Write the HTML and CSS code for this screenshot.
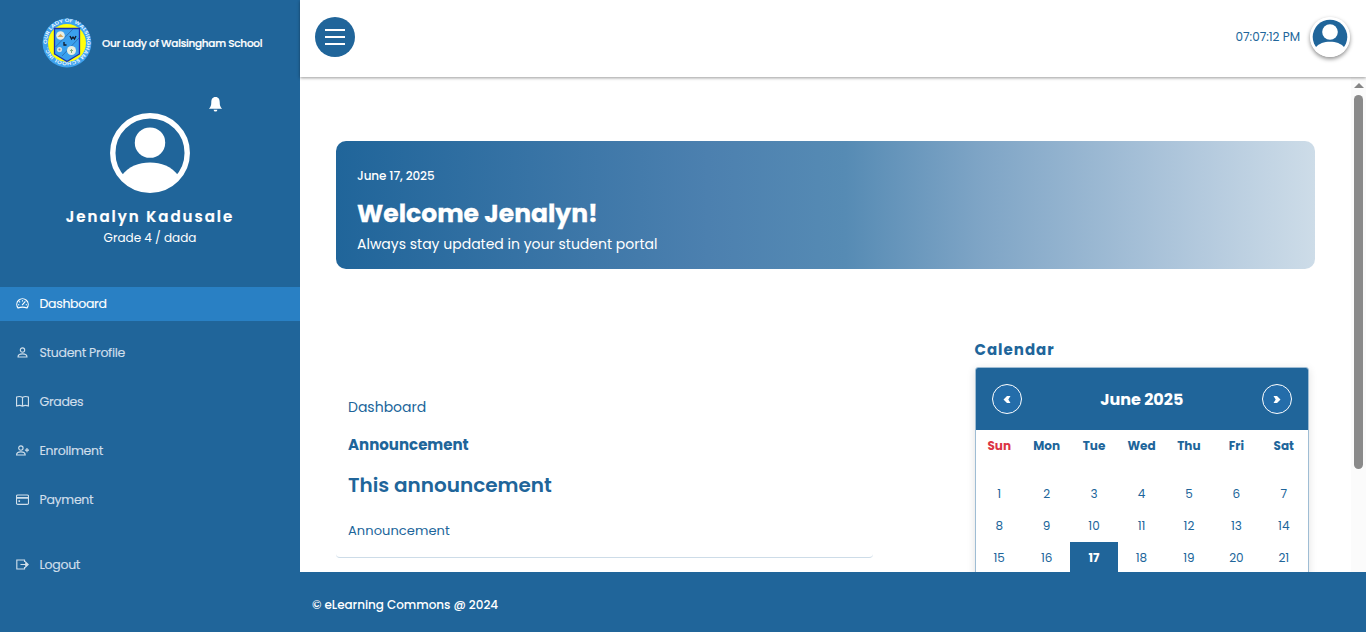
FILE: index.html
```html
<!DOCTYPE html>
<html lang="en">
<head>
<meta charset="utf-8">
<title>Student Portal</title>
<link rel="stylesheet" href="styles.css">
</head>
<body>
<div class="app">
  <aside class="sidebar">
    <div class="brand">
      <svg class="brand-logo" viewBox="0 0 50 50">
        <defs><path id="ring" d="M5.200 26A19.900 19.900 0 1 1 44.800 26A19.900 19.900 0 0 1 5.200 26"/></defs>
        <circle cx="25" cy="25" r="24.400" fill="#3ea2ee"/>
        <circle cx="25" cy="25" r="19" fill="#ffff0a"/>
        <path d="M12.500 10.500H37.500V36L25 43.500 12.500 36Z" fill="#3aa0ee" stroke="#1c2fae" stroke-width="1.300"/>
        <path d="M13.500 29 31 11M20 38 37 20" stroke="#285f9d" stroke-width=".7"/>
        <circle cx="18.500" cy="17.500" r="4.300" fill="#e8efe2"/><path d="M15.500 19h6l-3-3z" fill="#d5a75c"/>
        <circle cx="29.500" cy="32.500" r="4.500" fill="#e8efe2"/><path d="M28 32.500h3M29.500 31v4" stroke="#7bab84"/>
        <circle cx="17.500" cy="31.500" r="2.600" fill="#d2e0e5"/><circle cx="17.500" cy="31.500" r="1" fill="#888"/>
        <path d="M28 18l1.500 3 1.500-2 1.500 2 1.500-3M22 24v3h2.500" fill="none" stroke="#111b2a" stroke-width="1.300"/>
        <text class="ring-text"><textPath href="#ring" textLength="121" lengthAdjust="spacingAndGlyphs">OUR LADY OF WALSINGHAM SCHOOL INC.</textPath></text>
      </svg>
      <span class="brand-name">Our Lady of Walsingham School</span>
    </div>
    <div class="profile">
      <svg class="bell" viewBox="0 0 16 16"><path d="M8 16a2 2 0 0 0 2-2H6a2 2 0 0 0 2 2M8 .5C4.700.5 3.500 3 3.500 6 3.500 9.500 2.800 11 1 13h14c-1.800-2-2.500-3.500-2.500-7C12.500 3 11.300.5 8 .5"/></svg>
      <svg class="avatar" viewBox="0 0 81 81"><circle cx="40.500" cy="40.500" r="37.700" fill="none" stroke="#fff" stroke-width="5.500"/><circle cx="40.500" cy="30" r="15.400" fill="#fff"/><path d="M12 63C19 54 29 50 40.500 50S62 54 69 63L61 74Q40.500 84 20 74Z" fill="#fff"/></svg>
      <div class="profile-name">Jenalyn Kadusale</div>
      <div class="profile-grade">Grade 4 / dada</div>
    </div>
    <nav class="menu">
      <a class="item active"><svg viewBox="0 0 16 16"><path d="M2.500 13.500A7 7 0 1 1 13.500 13.500C10 12.100 6 12.100 2.500 13.500ZM8 4v1.500M2.500 9.500H4M12 9.500h1.500M4 5.500l1 1M7.500 10l4-4.500"/></svg><span>Dashboard</span></a>
      <a class="item"><svg viewBox="0 0 16 16"><circle cx="8" cy="5" r="2.700"/><path d="M2.500 13.500c0-5 11-5 11 0Z"/></svg><span>Student Profile</span></a>
      <a class="item"><svg viewBox="0 0 16 16"><path d="M8 3C6 1.700 3 1.700.7 2.500v11C3 12.700 6 12.700 8 13.800c2-1.100 5-1.100 7.300-.3v-11C13 1.700 10 1.700 8 3Zm0 0v10.800"/></svg><span>Grades</span></a>
      <a class="item"><svg viewBox="0 0 16 16"><circle cx="6" cy="5" r="2.700"/><path d="M.7 13.500c0-5 10.600-5 10.600 0ZM13.500 5v5M11 7.500h5"/></svg><span>Enrollment</span></a>
      <a class="item"><svg viewBox="0 0 16 16"><rect x=".6" y="2.500" width="14.800" height="11.500" rx="1.500"/><path d="M.6 6h14.800M3 10h2" stroke-width="2"/></svg><span>Payment</span></a>
      <a class="item logout"><svg viewBox="0 0 16 16"><path d="M10.500 5V2.500H1V13.500h9.500V11M5.500 8H15M12 5l3 3-3 3Z"/></svg><span>Logout</span></a>
    </nav>
  </aside>
  <div class="content">
    <header class="topbar">
      <button class="toggle" aria-label="Toggle menu"><i></i><i></i><i></i></button>
      <div class="account">
        <span class="clock">07:07:12 PM</span>
        <svg class="account-avatar" viewBox="0 0 40 40"><circle cx="20" cy="20" r="20" fill="#fff"/><circle cx="20" cy="20" r="17.300" fill="#20659a"/><circle cx="20" cy="15" r="7.800" fill="#fff"/><path d="M5.700 30.500C9 26.500 14 24.800 20 24.800s11 1.700 14.300 5.700L32 36 20 38.500 8 36Z" fill="#fff"/></svg>
      </div>
    </header>
    <div class="scroll-area">
      <main class="page">
        <section class="banner">
          <div class="date">June 17, 2025</div>
          <h1>Welcome Jenalyn!</h1>
          <p>Always stay updated in your student portal</p>
        </section>
        <div class="columns">
          <section class="card">
            <div class="crumb">Dashboard</div>
            <h3>Announcement</h3>
            <h2>This announcement</h2>
            <p>Announcement</p>
          </section>
          <section class="calendar-block">
            <h4>Calendar</h4>
            <div class="calendar">
              <div class="calendar-head">
                <button aria-label="Previous month"><svg viewBox="0 0 8 8"><path d="M4 0h4L5.500 4 8 8H4L0 4Z"/></svg></button>
                <strong>June 2025</strong>
                <button aria-label="Next month"><svg viewBox="0 0 8 8"><path d="M4 0H0l2.500 4L0 8h4l4-4Z"/></svg></button>
              </div>
              <div class="week days"><b class="sun">Sun</b><b>Mon</b><b>Tue</b><b>Wed</b><b>Thu</b><b>Fri</b><b>Sat</b></div>
              <div class="week dates"><span>1</span><span>2</span><span>3</span><span>4</span><span>5</span><span>6</span><span>7</span><span>8</span><span>9</span><span>10</span><span>11</span><span>12</span><span>13</span><span>14</span><span>15</span><span>16</span><span class="today">17</span><span>18</span><span>19</span><span>20</span><span>21</span></div>
            </div>
          </section>
        </div>
      </main>
      <div class="scrollbar"><i class="arrow"></i><i class="thumb"></i></div>
    </div>
    <footer class="footer"><span>© eLearning Commons @ 2024</span></footer>
  </div>
</div>
</body>
</html>
```

FILE: styles.css
```css
* { box-sizing: border-box; }
body { margin: 0; font-family: Poppins, Inter, sans-serif; color: #20659a; background: #fff; overflow: hidden; }
h1, h2, h3, h4, p { margin: 0; }
button { padding: 0; font: inherit; }
.app { display: flex; width: 1366px; height: 632px; white-space: nowrap; }
.sidebar { width: 300px; flex: none; background: #20659a; color: #fff; }
.brand { display: flex; align-items: center; gap: 10px; height: 87px; padding-left: 42px; }
.brand-logo { width: 50px; height: 50px; margin-top: -1px; overflow: visible; }
.ring-text { font-size: 5px; font-weight: 600; fill: #e8f5ff; }
.brand-name { font-size: 10.5px; font-weight: 500; letter-spacing: -.28px; -webkit-text-stroke: .2px #fff; }
.profile { position: relative; height: 200px; padding-top: 26px; text-align: center; }
.bell { position: absolute; left: 208px; top: 9px; width: 15px; height: 16px; fill: #fff; }
.avatar { display: block; width: 80px; height: 80px; margin: 0 auto; overflow: visible; }
.profile-name { margin-top: 12px; font-size: 15px; line-height: 24px; font-weight: 600; letter-spacing: 2px; -webkit-text-stroke: .2px #fff; }
.profile-grade { font-size: 12px; line-height: 18px; }
.menu { display: flex; flex-direction: column; gap: 15px; }
.item { display: flex; align-items: center; gap: 11px; height: 34px; padding-left: 15.5px; font-size: 12.5px; letter-spacing: -.3px; color: #d0dfeb; -webkit-text-stroke: .15px currentColor; }
.item svg { width: 13px; height: 13px; margin-top: -2px; fill: none; stroke: currentColor; stroke-width: 1.4; }
.item.active { background: #2980c4; color: #fff; }
.item.logout { margin-top: 16px; }
.content { display: flex; flex: 1; flex-direction: column; min-width: 0; }
.topbar { position: relative; display: flex; flex: none; justify-content: space-between; height: 77px; padding: 17px 16px 0 15px; background: #fff; box-shadow: 0 1px 3px rgba(0,0,0,.4); }
.toggle { display: flex; flex-direction: column; align-items: center; justify-content: center; gap: 5px; width: 40px; height: 40px; border: 0; border-radius: 50%; background: #20659a; }
.toggle i { width: 20px; height: 2px; background: #fff; }
.account { display: flex; align-items: center; gap: 10px; height: 40px; }
.clock { font-size: 12px; }
.account-avatar { width: 40px; height: 40px; border-radius: 50%; box-shadow: 0 2px 4px rgba(0,0,0,.45); }
.scroll-area { display: flex; flex: 1; min-height: 0; overflow: hidden; }
.page { flex: 1; padding: 64px 36px 0; }
.banner { width: 979px; height: 128px; padding: 25px 21px 0; border-radius: 10px; color: #fff; background: linear-gradient(90deg, #20659a 0%, #4c80af 38%, #568bb4 52%, #7fa5c6 66%, #b0c7dc 87%, #cddce8 100%); }
.date { font-size: 12px; line-height: 20px; font-weight: 500; letter-spacing: -.1px; }
.banner h1 { margin-top: 9px; font-size: 25px; line-height: 38px; font-weight: 700; -webkit-text-stroke: .3px #fff; }
.banner p { font-size: 14px; line-height: 22px; }
.columns { display: flex; justify-content: space-between; width: 972.5px; margin-top: 69px; }
.card { width: 537px; height: 220px; padding: 59px 12px 0; border-bottom: 1px solid #cddce8; border-radius: 4px; }
.crumb { font-size: 14px; line-height: 21px; }
.card h3 { margin-top: 16px; font-size: 15px; line-height: 22px; font-weight: 700; }
.card h2 { margin-top: 14px; font-size: 20px; line-height: 30px; font-weight: 600; }
.card p { margin-top: 20px; font-size: 13px; line-height: 21px; letter-spacing: .08px; }
.calendar-block { width: 334px; }
.calendar-block h4 { font-size: 15px; line-height: 23px; font-weight: 700; letter-spacing: 1px; }
.calendar { width: 334px; height: 260px; margin-top: 6px; border: 1px solid #9fbdd4; border-radius: 3px; box-shadow: 0 2px 8px rgba(0,0,0,.12); }
.calendar-head { display: flex; align-items: center; justify-content: space-between; height: 62px; padding: 0 15.5px 0 16px; color: #fff; background: #20659a; border-radius: 2px 2px 0 0; font-size: 16px; }
.calendar-head button { display: flex; align-items: center; justify-content: center; width: 30px; height: 30px; border: 1px solid #fff; border-radius: 50%; background: #246daa; }
.calendar-head svg { width: 8px; height: 7px; fill: #fff; }
.week { display: grid; grid-template-columns: repeat(7, 1fr); text-align: center; font-size: 12px; line-height: 32px; }
.days { margin-bottom: 16px; }
.sun { color: #dc3545; }
.today { color: #fff; background: #20659a; font-weight: 700; }
.scrollbar { display: flex; flex-direction: column; align-items: center; width: 15px; padding-top: 6px; background: #fbfbfb; }
.arrow { border: 5px solid transparent; border-top: 0; border-bottom: 5px solid #858585; }
.thumb { width: 9px; height: 374px; margin-top: 7px; border-radius: 5px; background: #8a8a8a; }
.footer { display: flex; flex: none; align-items: center; height: 60px; padding: 6px 12px 0; color: #fff; background: #20659a; font-size: 12px; font-weight: 500; letter-spacing: -.04px; }
```
